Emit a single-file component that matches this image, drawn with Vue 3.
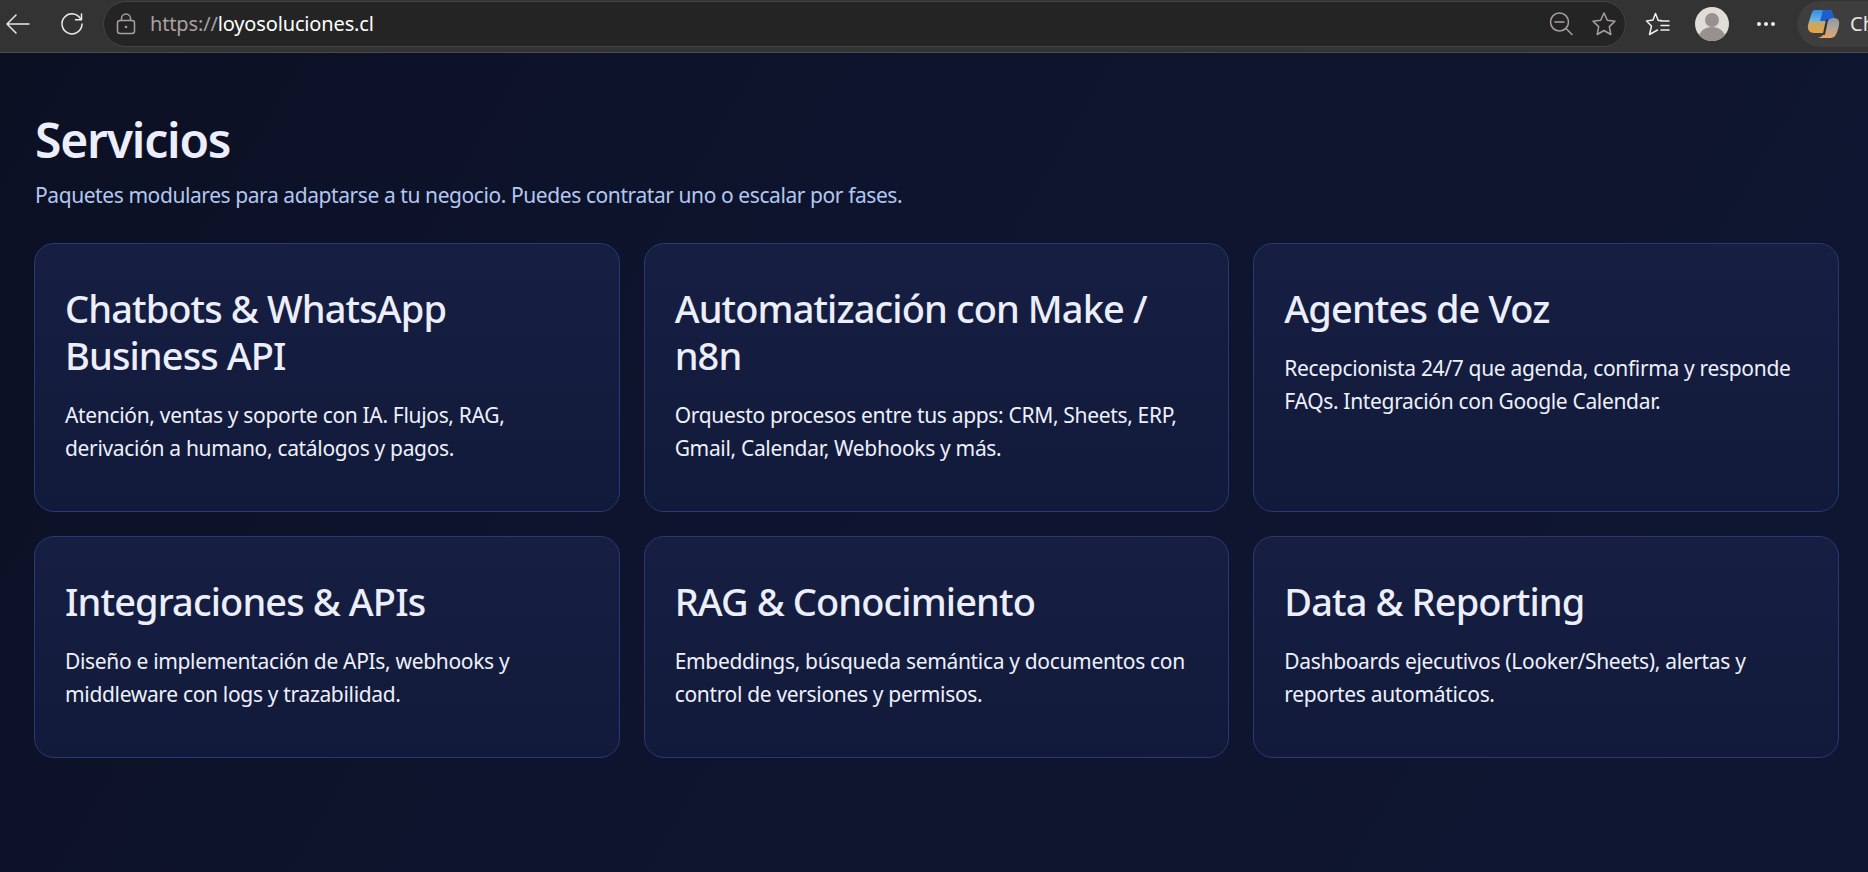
<template>
  <div class="window">
    <header class="toolbar">
      <button class="tool tool--back" aria-label="Atrás">
        <svg width="26" height="22" viewBox="0 0 26 22" fill="none" stroke="#e8e8e8" stroke-width="1.5" stroke-linecap="round" stroke-linejoin="round">
          <path d="M2 11h22M11 2l-9 9 9 9" />
        </svg>
      </button>
      <button class="tool tool--reload" aria-label="Recargar">
        <svg width="24" height="24" viewBox="0 0 24 24" fill="none" stroke="#ececec" stroke-width="1.5" stroke-linecap="round" stroke-linejoin="round">
          <path d="M21 7.500A10 10 0 1 0 22 12" />
          <path d="M21.500 2v5.800h-6" />
        </svg>
      </button>

      <div class="address">
        <svg class="lock" width="20" height="22" viewBox="0 0 20 22" fill="none" stroke="#a8a0a0" stroke-width="1.500">
          <rect x="1.500" y="7.500" width="17" height="13" rx="2.500" />
          <path d="M5.500 7.500V5.500a4.500 4.500 0 0 1 9 0v2" />
          <circle cx="10" cy="14" r="1.300" fill="#a8a0a0" stroke="none" />
        </svg>
        <span class="url"><span class="url__scheme">https://</span>loyosoluciones.cl</span>
        <div class="address__actions">
          <svg width="24" height="24" viewBox="0 0 24 24" fill="none" stroke="#a8a0a0" stroke-width="1.500" stroke-linecap="round">
            <circle cx="10.500" cy="10" r="9" />
            <path d="M6 10h9M17 16.500l6 6" />
          </svg>
          <svg width="26" height="26" viewBox="0 0 26 26" fill="none" stroke="#a8a0a0" stroke-width="1.500" stroke-linejoin="round">
            <path d="m13 2 3.300 7.300 7.700.9-5.700 5.400 1.500 7.900-6.800-4-6.800 4 1.500-7.900L2 10.200l7.700-.9z" />
          </svg>
        </div>
      </div>

      <div class="tools-right">
        <svg width="26" height="24" viewBox="0 0 26 24" fill="none" stroke="#f0f0f0" stroke-width="1.500" stroke-linejoin="round" stroke-linecap="round">
          <path d="M16 8.500h-2.800L10.500 1.500 8 8 1.500 9l5 5-2 8.500 8-4.500" />
          <path d="M16 9h8M16 13.500h8M16 18h8" />
        </svg>
        <div class="avatar">
          <svg width="34" height="34" viewBox="0 0 34 34">
            <circle cx="17" cy="17" r="17" fill="#e0dcd6" />
            <circle cx="17" cy="13" r="7" fill="#99918f" />
            <path d="M4 28c3-6 8-8 13-8s10 2 13 8a17 17 0 0 1-26 0z" fill="#99918f" />
          </svg>
        </div>
        <span class="dots"><i></i><i></i><i></i></span>
        <div class="copilot">
          <svg width="33" height="30" viewBox="0 0 33 30">
            <defs>
              <linearGradient id="copilotA" x1="0" y1="0" x2="0" y2="1">
                <stop offset="0" stop-color="#2f8fe0" />
                <stop offset="0.48" stop-color="#6fb4e0" />
                <stop offset="0.54" stop-color="#c4a868" />
                <stop offset="1" stop-color="#e2a544" />
              </linearGradient>
              <linearGradient id="copilotB" x1="0" y1="0" x2="0" y2="1">
                <stop offset="0" stop-color="#8d97a8" />
                <stop offset="0.45" stop-color="#b0a49c" />
                <stop offset="1" stop-color="#e8a468" />
              </linearGradient>
            </defs>
            <path d="M8 1h16l3 8c-4 0-7 3-8 7l-2 8H7c-4 0-7-3-6-8L4 6c1-3 2-5 4-5z" fill="url(#copilotA)" />
            <path d="M16 1h6c2 0 3 1 4 4l1 4c-3 .5-5 1-7 3l-7 0 2-7c0-2 1-4 1-4z" fill="#1d5fcc" />
            <path d="M27 9c4 0 6 3 5 7-1 5-2 8-4 11-2 2-4 2-6 2H9c4 0 7-2 8-5l2-8c1-4 4-7 8-7z" fill="url(#copilotB)" />
            <path d="M20 11l-3 14" stroke="#3a3230" stroke-width="2.200" stroke-linecap="round" fill="none" />
          </svg>
          <span class="copilot__label">Ch</span>
        </div>
      </div>
    </header>

    <main class="page">
      <h1 class="page__title">Servicios</h1>
      <p class="page__lead">Paquetes modulares para adaptarse a tu negocio. Puedes contratar uno o escalar por fases.</p>

      <div class="grid">
        <article v-for="service in services" :key="service.title" class="card">
          <h3 class="card__title">{{ service.title }}</h3>
          <p class="card__text">{{ service.text }}</p>
        </article>
      </div>
    </main>
  </div>
</template>

<script setup>
const services = [
  {
    title: 'Chatbots & WhatsApp Business API',
    text: 'Atención, ventas y soporte con IA. Flujos, RAG, derivación a humano, catálogos y pagos.',
  },
  {
    title: 'Automatización con Make / n8n',
    text: 'Orquesto procesos entre tus apps: CRM, Sheets, ERP, Gmail, Calendar, Webhooks y más.',
  },
  {
    title: 'Agentes de Voz',
    text: 'Recepcionista 24/7 que agenda, confirma y responde FAQs. Integración con Google Calendar.',
  },
  {
    title: 'Integraciones & APIs',
    text: 'Diseño e implementación de APIs, webhooks y middleware con logs y trazabilidad.',
  },
  {
    title: 'RAG & Conocimiento',
    text: 'Embeddings, búsqueda semántica y documentos con control de versiones y permisos.',
  },
  {
    title: 'Data & Reporting',
    text: 'Dashboards ejecutivos (Looker/Sheets), alertas y reportes automáticos.',
  },
]
</script>

<style>
html,
body {
  margin: 0;
  background: #0b1026;
}
</style>

<style scoped>
.window {
  display: flex;
  flex-direction: column;
  height: 872px;
  overflow: hidden;
  font-family: "Noto Sans", "Open Sans", sans-serif;
}

/* ---------- browser toolbar ---------- */
.toolbar {
  display: flex;
  align-items: center;
  flex: 0 0 53px;
  height: 53px;
  box-sizing: border-box;
  padding-bottom: 5px;
  background: #333333;
  border-bottom: 1px solid #4a4a4a;
}

.tool {
  display: flex;
  align-items: center;
  justify-content: center;
  padding: 0;
  border: none;
  background: none;
}

.tool--back {
  margin-left: 5px;
  width: 26px;
}

.tool--reload {
  margin-left: 29px;
  width: 24px;
}

.address {
  display: flex;
  align-items: center;
  flex: 0 0 1523px;
  box-sizing: border-box;
  height: 46px;
  margin-left: 19px;
  padding: 0 8px 0 12px;
  background: #242424;
  border: 1px solid #444444;
  border-radius: 23px;
}

.url {
  margin-left: 14px;
  font-size: 20px;
  color: #ffffff;
  letter-spacing: -0.15px;
}

.url__scheme {
  color: #a8a0a0;
}

.address__actions {
  display: flex;
  align-items: center;
  gap: 18px;
  margin-left: auto;
}

.tools-right {
  display: flex;
  align-items: center;
  flex: 1;
  padding-left: 19px;
}

.avatar {
  display: flex;
  margin-left: 24px;
}

.dots {
  display: flex;
  gap: 3px;
  margin-left: 28px;
}

.dots i {
  width: 4px;
  height: 4px;
  border-radius: 50%;
  background: #eeeeee;
}

.copilot {
  display: flex;
  align-items: center;
  flex: 1;
  height: 46px;
  margin-left: 22px;
  padding-left: 10px;
  overflow: hidden;
  background: #3e3e3e;
  border-radius: 23px 0 0 23px;
}

.copilot__label {
  margin-left: 10px;
  font-size: 20px;
  color: #e4e4e4;
}

/* ---------- page ---------- */
.page {
  flex: 1;
  box-sizing: border-box;
  padding: 57px 29px 0 35px;
  background: linear-gradient(120deg, #0b1023 0%, #0e142d 40%, #0f1631 100%);
}

.page__title {
  margin: 0;
  font-size: 48px;
  line-height: 60px;
  font-weight: 600;
  letter-spacing: -1.2px;
  color: #eceefb;
}

.page__lead {
  margin: 10px 0 0;
  font-size: 21px;
  line-height: 30px;
  letter-spacing: -0.42px;
  color: #b3c7f0;
}

.grid {
  display: grid;
  grid-template-columns: repeat(3, 1fr);
  gap: 24px;
  margin: 33px 0 0 -1px;
}

.card {
  box-sizing: border-box;
  padding: 41px 30px 46px;
  background: linear-gradient(180deg, #161f42 0%, #111a3a 100%);
  border: 1px solid #2a3875;
  border-radius: 20px;
}

.card__title {
  margin: 0;
  font-size: 38px;
  line-height: 47px;
  font-weight: 500;
  letter-spacing: -0.9px;
  color: #eceefb;
}

.card__text {
  margin: 20px 0 0;
  font-size: 21px;
  line-height: 33px;
  letter-spacing: -0.33px;
  color: #eef0fb;
}
</style>
